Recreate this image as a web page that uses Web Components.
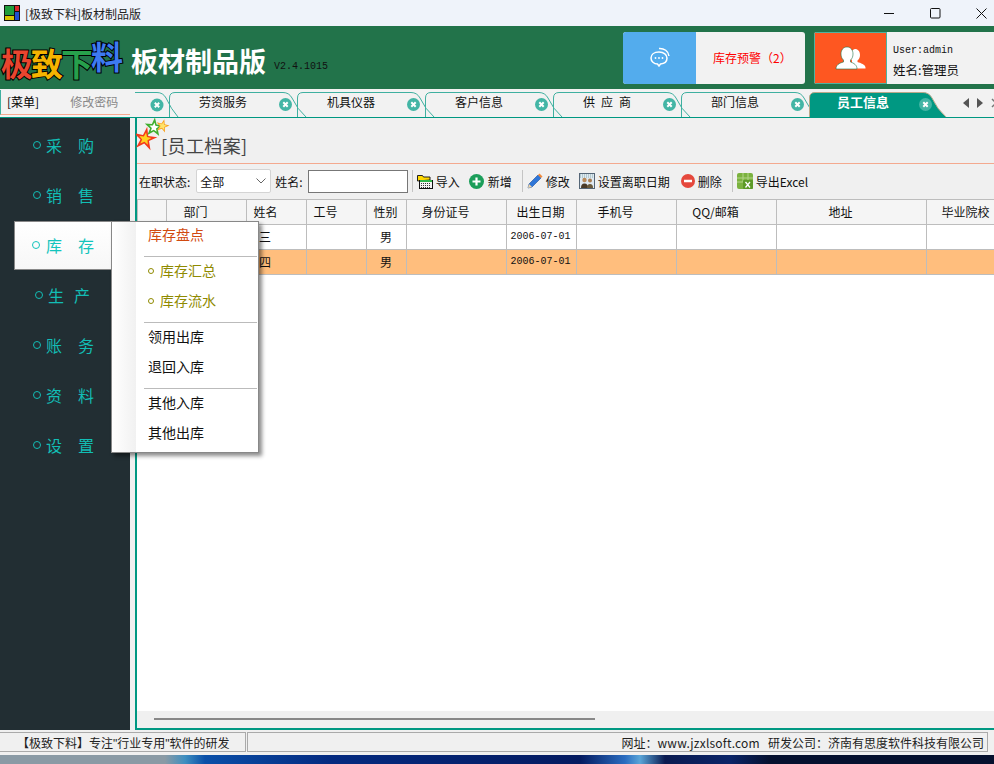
<!DOCTYPE html>
<html lang="zh">
<head>
<meta charset="utf-8">
<title>板材制品版</title>
<style>
  html, body { margin: 0; padding: 0; height: 100%; overflow: hidden; }
  body { font-family: "Noto Sans CJK SC", "Liberation Sans", sans-serif; font-size: 12px; background: #f0f0f0; }
</style>
</head>
<body>
<app-window></app-window>

<script>
const CJK = `"Noto Sans CJK SC", sans-serif`;

class TitleBar extends HTMLElement {
  constructor() {
    super();
    this.attachShadow({ mode: 'open' }).innerHTML = `
<style>
  :host { display: flex; align-items: center; height: 26px; background: #eff3fa; font: 12px ${CJK}; color: #222; overflow: hidden; }
  .logo { margin: 0 5px 0 4px; width: 16px; height: 16px; flex: none; }
  .txt { flex: 1; }
  .btn { width: 46px; height: 26px; display: flex; align-items: center; justify-content: center; flex: none; }
  .btn:last-child { margin-right: -10px; }
</style>
<svg class="logo" viewBox="0 0 16 16"><rect width="16" height="16" fill="#111"/><rect x="1" y="1" width="9" height="9" fill="#1f9d3c"/><rect x="11" y="1" width="4" height="5" fill="#d92a2a"/><rect x="11" y="7" width="4" height="8" fill="#1f4fd0"/><rect x="1" y="11" width="9" height="4" fill="#d8c400"/></svg>
<span class="txt">[极致下料]板材制品版</span>
<span class="btn"><svg width="10" height="10"><path d="M0 5.500h10" stroke="#111"/></svg></span>
<span class="btn"><svg width="11" height="11"><rect x=".5" y=".5" width="9.500" height="9.500" rx="1" fill="none" stroke="#111"/></svg></span>
<span class="btn"><svg width="11" height="11"><path d="M.5.5l10 10M10.500.5l-10 10" stroke="#111"/></svg></span>`;
  }
}

class AppHeader extends HTMLElement {
  constructor() {
    super();
    this.attachShadow({ mode: 'open' }).innerHTML = `
<style>
  :host { display: flex; align-items: stretch; height: 63px; background: #22734a; box-sizing: border-box; position: relative; }
  .logo { display: flex; align-items: flex-end; width: 131px; padding: 0 0 11px 1px; box-sizing: border-box; font: 700 32px/1 ${CJK}; letter-spacing: -2px; flex: none; }
  .logo span { -webkit-text-stroke: 2px #000; paint-order: stroke fill; }
  .l1 { color: #e8452f; }
  .l2 { color: #f5b400; }
  .l3 { color: #27a04c; }
  .l4 { color: #3d7af0; position: relative; top: -7px; }
  .name { font: 700 27px/1 ${CJK}; color: #fff; align-self: flex-end; padding-bottom: 15px; letter-spacing: 0; }
  .ver { font: 10px "Liberation Mono", monospace; color: #111; align-self: flex-end; padding: 0 0 17px 8px; flex: 1; }
  .card { display: flex; height: 52px; margin-top: 6px; background: #f2f2f2; border-radius: 3px; overflow: hidden; flex: none; }
  .alarm { width: 182px; }
  .alarm .ic { width: 73px; background: #53aced; display: flex; align-items: center; justify-content: center; }
  .alarm .t { flex: 1; color: #f00; font: 12px ${CJK}; display: flex; align-items: center; padding: 0 0 2px 17px; }
  .user { width: 180px; margin-left: 9px; border-radius: 3px 0 0 3px; }
  .user .ic { width: 73px; box-sizing: border-box; border: 1px solid #4fb3a0; background: #fe5721; display: flex; align-items: center; justify-content: center; }
  .user .t { flex: 1; padding: 12px 0 0 6px; color: #111; }
  .u1 { font: 10px/14px "Liberation Mono", monospace; }
  .u2 { font: 12.500px/18px ${CJK}; margin-top: 3px; white-space: nowrap; }
</style>
<div class="logo"><span class="l1">极</span><span class="l2">致</span><span class="l3">下</span><span class="l4">料</span></div>
<div class="name">板材制品版</div>
<div class="ver">V2.4.1015</div>
<div class="card alarm"><div class="ic">
  <svg width="24" height="24" viewBox="0 0 24 24" fill="none" stroke="#fff" stroke-width="1.500"><path d="M11 6c-5 0-8 2.600-8 6s3 6 6.500 6l1.500 2 1.500-2c4-.3 6.500-2.800 6.500-6s-3-6-8-6z"/><path d="M11 2.500c5-.3 9.500 2.500 10 7.500"/><circle cx="7.500" cy="12" r=".9" fill="#fff" stroke="none"/><circle cx="11" cy="12" r=".9" fill="#fff" stroke="none"/><circle cx="14.500" cy="12" r=".9" fill="#fff" stroke="none"/></svg>
</div><div class="t">库存预警（2）</div></div>
<div class="card user"><div class="ic">
  <svg width="32" height="24" viewBox="0 0 32 24" fill="#fff"><path d="M20 3c3 0 5 2.500 5 6 0 2.500-1 4.500-2.500 5.500v1.500c3 1 8 2.500 8 5.500v1H21c0-3-2-4.500-4-5.800v-2.200c-.8-1-1.300-2.500-1.300-4.500 0-2 .5-3.500 1.300-5 .8-1 1.800-2 3-2z"/><path d="M12 1c3.500 0 6 2.700 6 7 0 2.800-1 4.800-2.500 6v2c3.500 1.200 6.500 3 6.500 7H1c0-4 3-5.800 7.500-7v-2C7 12.800 6 10.800 6 8c0-4.300 2.500-7 6-7z" stroke="#22734a" stroke-width=".6"/></svg>
</div><div class="t"><div class="u1">User:admin</div><div class="u2">姓名:管理员</div></div></div>`;
  }
}

// 一个 tab，形状用 svg 背景画
class TabItem extends HTMLElement {
  constructor() {
    super();
    this.attachShadow({ mode: 'open' }).innerHTML = `
<style>
  :host { display: block; position: relative; width: 128px; height: 25px; flex: none; margin-top: 3px; font: 12px/20px ${CJK}; color: #111; text-align: center; }
  :host([active]) { color: #fff; font-weight: 700; font-size: 13px; }
  svg.shape { position: absolute; left: 0; top: 0; width: 137px; height: 25px; overflow: visible; }
  .lb { position: relative; display: block; padding-right: 20px; white-space: pre; }
  .x { position: absolute; right: 5px; top: 6px; width: 13px; height: 13px; }
  path.bg { fill: none; stroke: #3fb0a0; }
  :host([active]) path.bg { fill: #009882; stroke: #b9a98a; }
</style>
<svg class="shape" viewBox="0 0 137 25"><path class="bg" d="M.5 25V6Q.5 .5 6 .5H114Q120 .5 123 6Q128 17 137 25"/></svg>
<span class="lb"><slot></slot></span>
<svg class="x" viewBox="0 0 13 13"><circle cx="6.500" cy="6.500" r="6.500" fill="#43b5a5"/><path d="M4.300 4.300l4.400 4.400M8.700 4.300l-4.400 4.400" stroke="#fff" stroke-width="2"/></svg>`;
  }
}

class TabStrip extends HTMLElement {
  constructor() {
    super();
    this.attachShadow({ mode: 'open' }).innerHTML = `
<style>
  :host { display: flex; height: 28px; background: #f2f2f2; border-bottom: 1px solid #009882; box-sizing: content-box; position: relative; }
  .fixed { width: 130px; flex: none; box-sizing: border-box; display: flex; align-items: center; height: 25px; margin: 1px 5px 0 0; border-left: 1px solid #3fb0a0; border-bottom: 1px solid #f4a98f; font: 12px ${CJK}; padding: 0 0 2px 6px; }
  .fixed span { color: #888; margin-left: 31px; }
  .rest { display: flex; flex: 1; overflow: hidden; position: relative; }
  .stub { width: 34px; flex: none; position: relative; }
  .stub svg { position: absolute; left: 0; top: 3px; }
  .nav { position: absolute; right: 0; top: 0; width: 33px; height: 28px; background: #f2f2f2; display: flex; align-items: center; gap: 8px; padding: 0 0 0 2px; box-sizing: border-box; overflow: hidden; }
  .nav svg { flex: none; }
</style>
<div class="fixed">[菜单]<span>修改密码</span></div>
<div class="rest">
  <div class="stub"><svg width="45" height="25" viewBox="0 0 45 25"><path d="M0 .5H22Q28 .5 31 6Q36 17 43 25" fill="none" stroke="#3fb0a0"/><circle cx="22" cy="13" r="6.500" fill="#43b5a5"/><path d="M19.800 10.800l4.400 4.400M24.200 10.800l-4.400 4.400" stroke="#fff" stroke-width="2"/></svg></div>
  <tab-item>劳资服务</tab-item>
  <tab-item>机具仪器</tab-item>
  <tab-item>客户信息</tab-item>
  <tab-item>供&ensp;应&ensp;商</tab-item>
  <tab-item>部门信息</tab-item>
  <tab-item active>员工信息</tab-item>
  <div class="nav"><svg width="6" height="10"><path d="M6 0v10L0 5z" fill="#555"/></svg><svg width="6" height="10"><path d="M0 0v10l6-5z" fill="#555"/></svg><svg width="6" height="10"><path d="M1 1l4 4-4 4" fill="none" stroke="#777" stroke-width="1.500"/></svg></div>
</div>`;
  }
}

class SideItem extends HTMLElement {
  constructor() {
    super();
    this.attachShadow({ mode: 'open' }).innerHTML = `
<style>
  :host { display: flex; align-items: center; height: 50px; padding-left: 33px; box-sizing: border-box; color: #12bdb5; font: 16px ${CJK}; white-space: pre; }
  i { width: 6px; height: 6px; border: 1px solid currentColor; border-radius: 50%; margin-right: 5px; flex: none; }
</style>
<i></i><slot></slot>`;
  }
}

class SideBar extends HTMLElement {
  constructor() {
    super();
    this.attachShadow({ mode: 'open' }).innerHTML = `
<style>
  :host { display: block; width: 130px; flex: none; background: #222e33; padding-top: 2px; box-sizing: border-box; position: relative; }
  .open { height: 50px; }
  .narrow { padding-left: 35px; letter-spacing: 1px; }
</style>
<side-item>采　购</side-item>
<side-item>销　售</side-item>
<div class="open"></div>
<side-item class="narrow">生&ensp;产</side-item>
<side-item>账　务</side-item>
<side-item>资　料</side-item>
<side-item>设　置</side-item>`;
  }
}

// 悬浮的库存菜单，连同侧栏里被选中的那一项
class StockMenu extends HTMLElement {
  constructor() {
    super();
    this.attachShadow({ mode: 'open' }).innerHTML = `
<style>
  :host { position: absolute; left: 14px; top: 221px; display: block; font: 14px ${CJK}; z-index: 5; }
  .tab { position: absolute; left: 0; top: 0; width: 98px; height: 49px; background: linear-gradient(#fff, #f7f7f7); border: 1px solid #888; border-right: 0; box-sizing: border-box; color: #12c4bc; font-size: 16px; display: flex; align-items: center; padding: 0 0 2px 17px; white-space: pre; }
  .tab i { width: 6px; height: 6px; border: 1px solid currentColor; border-radius: 50%; margin-right: 6px; flex: none; }
  .pop { position: absolute; left: 97px; top: 0; width: 148px; height: 232px; box-sizing: border-box; border: 1px solid #888; background: linear-gradient(90deg, #fff, #f1f1f1 24px, #fff 24px); box-shadow: 3px 3px 4px rgba(0,0,0,.45); }
  .row { height: 30px; line-height: 24px; padding-left: 36px; color: #111; white-space: nowrap; }
  .row.o { color: #d14a10; }
  .row.y { color: #8f8a00; }
  .row.y i { display: inline-block; width: 4px; height: 4px; border: 1px solid currentColor; border-radius: 50%; margin-right: 6px; vertical-align: 2px; }
  hr { margin: 4px 1px 1px 32px; border: 0; border-top: 1px solid #bbb; height: 0; }
</style>
<div class="tab"><i></i>库　存</div>
<div class="pop">
  <div class="row o">库存盘点</div>
  <hr>
  <div class="row y"><i></i>库存汇总</div>
  <div class="row y"><i></i>库存流水</div>
  <hr>
  <div class="row">领用出库</div>
  <div class="row">退回入库</div>
  <hr>
  <div class="row">其他入库</div>
  <div class="row">其他出库</div>
</div>`;
  }
}

class ToolBtn extends HTMLElement {
  constructor() {
    super();
    this.attachShadow({ mode: 'open' }).innerHTML = `
<style>
  :host { display: inline-flex; align-items: center; gap: 3px; font: 12px ${CJK}; color: #111; white-space: nowrap; margin-right: 9px; }
  ::slotted(svg) { flex: none; }
</style>
<slot name="icon"></slot><slot></slot>`;
  }
}

class EmployeeTable extends HTMLElement {
  constructor() {
    super();
    const cols = [
      ['', 29], ['部门', 80], ['姓名', 60], ['工号', 60], ['性别', 40, 1], ['身份证号', 100],
      ['出生日期', 70, 1], ['手机号', 100], ['QQ/邮箱', 100], ['地址', 150], ['毕业院校', 100]
    ];
    const head = cols.map(c => `<th class="${c[2] ? 'mid' : ''}" style="width:${c[1]}px">${c[0]}</th>`).join('');
    const row = (cls, name) => `<tr class="${cls}"><td></td><td></td><td class="n">${name}</td><td></td><td class="c">男</td><td></td><td class="d">2006-07-01</td><td></td><td></td><td></td><td></td></tr>`;
    this.attachShadow({ mode: 'open' }).innerHTML = `
<style>
  :host { display: block; flex: 1; background: #fff; overflow: hidden; position: relative; min-height: 0; }
  table { border-collapse: collapse; table-layout: fixed; width: 889px; font: 12px ${CJK}; color: #111; }
  th { box-sizing: border-box; height: 25px; background: #f5f5f5; font-weight: 400; border: 1px solid #bdbdbd; padding: 0 22px 2px 0; text-align: center; white-space: nowrap; }
  th.mid { padding: 0 2px 2px 0; }
  td { box-sizing: border-box; height: 25px; border: 1px solid #bdbdbd; border-top: 0; padding: 0 0 2px; white-space: nowrap; }
  tr.sel td { background: #ffbe7d; }
  .c { text-align: center; padding-right: 1px; }
  .d { font: 10px "Liberation Mono", monospace; text-align: center; padding-right: 2px; }
</style>
<table><thead><tr>${head}</tr></thead><tbody>${row('', '张三')}${row('sel', '李四')}</tbody></table>`;
  }
}

// 画一颗尖角星
function star(cx, cy, R, r, fill, rot) {
  let pts = [];
  for (let i = 0; i < 10; i++) {
    let a = (rot + i * 36 - 90) * Math.PI / 180;
    let d = i % 2 ? r : R;
    pts.push((cx + d * Math.cos(a)).toFixed(1) + ',' + (cy + d * Math.sin(a)).toFixed(1));
  }
  return `<polygon points="${pts.join(' ')}" fill="${fill}"/>`;
}

class StaffPanel extends HTMLElement {
  constructor() {
    super();
    const stars = star(9, 21, 12.500, 4.500, '#f4391c', 10) + star(9, 21, 6.500, 2.800, '#ffd21f', 10)
      + star(18, 9.500, 10, 4, '#3fae2e', 5) + star(18, 9.500, 5, 2.200, '#fff', 5)
      + star(26.500, 8, 7, 2.800, '#f9a01b', 15) + star(26.500, 8, 4.500, 1.900, '#ffe36a', 15);
    this.attachShadow({ mode: 'open' }).innerHTML = `
<style>
  :host { display: flex; flex-direction: column; flex: 1; min-width: 0; margin-left: 5px; border-left: 2px solid #009882; border-bottom: 2px solid #009882; background: #f0f0f0; }
  .head { height: 46px; flex: none; border-bottom: 1px solid #f4a98f; display: flex; align-items: flex-end; position: relative; box-sizing: border-box; }
  .head svg { position: absolute; left: -1px; top: 0; }
  .title { font: 18px/24px ${CJK}; letter-spacing: .4px; color: #444; margin: 0 0 6px 24px; }
  .bar { height: 35px; flex: none; display: flex; align-items: center; font: 12px ${CJK}; color: #111; padding: 0 0 1px 2px; box-sizing: border-box; }
  .sel { width: 75px; height: 24px; margin: 0 4px 0 6px; background: #fff; border: 1px solid #d4d4d4; border-radius: 2px; display: flex; align-items: center; justify-content: space-between; padding: 0 4px 0 3px; box-sizing: border-box; flex: none; }
  .inp { width: 100px; height: 23px; margin-left: 5px; background: #fff; border: 1px solid #777; box-sizing: border-box; flex: none; }
  .sep { width: 1px; height: 22px; background: #c4c4c4; margin: 0 4px 0 1px; flex: none; }
  .hs { height: 17px; flex: none; background: #f0f0f0; position: relative; }
  .hs i { position: absolute; left: 17px; top: 7px; width: 441px; height: 2px; background: #888; }
</style>
<div class="head">
  <svg width="34" height="36" viewBox="0 0 34 36">${stars}</svg>
  <span class="title">[员工档案]</span>
</div>
<div class="bar">
  在职状态:
  <div class="sel">全部<svg width="10" height="6"><path d="M.5.5L5 5 9.500.5" fill="none" stroke="#666"/></svg></div>
  姓名:
  <div class="inp"></div>
  <span class="sep" style="margin-left:4px"></span>
  <tool-btn><svg slot="icon" width="16" height="16" viewBox="0 0 16 16"><path d="M.5 8V2.500h5l1 1.500h6.500v3z" fill="#ffd800" stroke="#222"/><rect x="2.500" y="7.500" width="13" height="8" fill="#f4f4f4" stroke="#111"/><rect x="3" y="7" width="12" height="2" fill="#2fb54a"/><path d="M4 10.500h10M4 12.500h10M4 14.500h10" stroke="#333" stroke-dasharray="1 1"/></svg>导入</tool-btn>
  <tool-btn><svg slot="icon" width="16" height="15" viewBox="0 0 16 15"><circle cx="7.500" cy="7.500" r="7.500" fill="#1c9e5a"/><path d="M7.500 3.500v8M3.500 7.500h8" stroke="#fff" stroke-width="2.200"/></svg>新增</tool-btn>
  <span class="sep"></span>
  <tool-btn><svg slot="icon" width="16" height="16" viewBox="0 0 16 16"><path d="M1 15l1-4L11 2l3 3-9 9z" fill="#2f76d8" stroke="#1a4f9e" stroke-width=".6"/><path d="M11 2l1.500-1.500 3 3L14 5z" fill="#f08a3c"/><path d="M1 15l1-4 3 3z" fill="#f3d7a8"/></svg>修改</tool-btn>
  <tool-btn><svg slot="icon" width="16" height="16" viewBox="0 0 16 16"><rect x=".5" y=".5" width="15" height="15" fill="#dfe9f2" stroke="#567"/><path d="M1 2h14M1 4h14" stroke="#8aa" stroke-dasharray="1 1"/><circle cx="5.500" cy="7" r="2.200" fill="#b98a5a"/><path d="M2 15c0-3 1-4.500 3.500-4.500S9 12 9 15z" fill="#4a3a28"/><circle cx="11" cy="7.500" r="2" fill="#a87c50"/><path d="M8 15c0-3 1-4 3-4s3 1 3 4z" fill="#6b5a3c"/></svg>设置离职日期</tool-btn>
  <tool-btn style="margin-left:2px"><svg slot="icon" width="14" height="14" viewBox="0 0 14 14"><circle cx="7" cy="7" r="7" fill="#e5483c"/><path d="M3 7h8" stroke="#fff" stroke-width="2.500"/></svg>删除</tool-btn>
  <span class="sep"></span>
  <tool-btn><svg slot="icon" width="16" height="16" viewBox="0 0 16 16"><rect x="0" y="0" width="16" height="16" rx="2" fill="#7bb23f"/><path d="M0 5h16M0 9h8M6 0v9M11 0v7" stroke="#b4d58a"/><rect x="6" y="7" width="10" height="9" rx="1" fill="#5d9a28"/><path d="M8.500 9l4.500 5.500M13 9l-4.500 5.500" stroke="#fff" stroke-width="1.300"/></svg>导出Excel</tool-btn>
</div>
<employee-table></employee-table>
<div class="hs"><i></i></div>`;
  }
}

class StatusBar extends HTMLElement {
  constructor() {
    super();
    this.attachShadow({ mode: 'open' }).innerHTML = `
<style>
  :host { display: flex; height: 20px; margin: 2px 0 3px; font: 12px ${CJK}; color: #222; background: #f0f0f0; flex: none; padding-right: 6px; }
  div { border: 1px solid #aaa; box-sizing: border-box; display: flex; align-items: center; height: 20px; }
  .a { width: 246px; padding-left: 17px; border-left: 0; white-space: nowrap; font-family: "Liberation Sans", "Noto Sans CJK SC", sans-serif; }
  .b { flex: 1; margin-left: 1px; justify-content: flex-end; padding-right: 3px; white-space: pre; }
  .b span { letter-spacing: .2px; }
</style>
<div class="a">【极致下料】专注"行业专用"软件的研发</div>
<div class="b">网址：<span>www.jzxlsoft.com</span>   研发公司：济南有思度软件科技有限公司</div>`;
  }
}

class AppWindow extends HTMLElement {
  constructor() {
    super();
    this.attachShadow({ mode: 'open' }).innerHTML = `
<style>
  :host { display: flex; flex-direction: column; width: 994px; height: 764px; overflow: hidden; position: relative; background: #f0f0f0; }
  .main { display: flex; flex: 1; min-height: 0; }
  .desk { height: 9px; flex: none; background: linear-gradient(90deg, #8a9aa5 0, #8a9aa5 165px, #3f8fc0 185px, #0a4fa8 205px, #042a80 330px, #041a60 580px, #2a6cc0 625px, #5aa5d8 640px, #0a1a50 665px, #0a2468 730px, #05102e 770px, #05102e 100%); }
</style>
<title-bar></title-bar>
<app-header></app-header>
<tab-strip></tab-strip>
<div class="main"><side-bar></side-bar><staff-panel></staff-panel></div>
<status-bar></status-bar>
<div class="desk"></div>
<stock-menu></stock-menu>`;
  }
}

customElements.define('title-bar', TitleBar);
customElements.define('app-header', AppHeader);
customElements.define('tab-item', TabItem);
customElements.define('tab-strip', TabStrip);
customElements.define('side-item', SideItem);
customElements.define('side-bar', SideBar);
customElements.define('stock-menu', StockMenu);
customElements.define('tool-btn', ToolBtn);
customElements.define('employee-table', EmployeeTable);
customElements.define('staff-panel', StaffPanel);
customElements.define('status-bar', StatusBar);
customElements.define('app-window', AppWindow);
</script>
</body>
</html>
